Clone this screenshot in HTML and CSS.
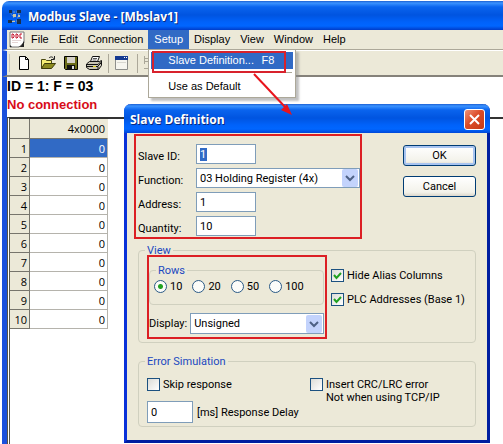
FILE: index.html
```html
<!DOCTYPE html>
<html lang="en">
<head>
<meta charset="utf-8">
<title>Modbus Slave - [Mbslav1]</title>
<link rel="stylesheet" href="styles.css">
</head>
<body>
<main class="window">
  <header class="titlebar">
    <svg class="app-icon" width="16" height="16" viewBox="0 0 16 16" fill="none">
      <path d="M3 3h10M3 3l4 6M12 4l-2 8M3 12h8" stroke="#7f9db0" stroke-dasharray="2 1"/>
      <path d="M2 1h3v3H2zM10 1h4v3h-4zM1 11h4v3H1zM10 10h4v5h-4z" fill="#18304e"/>
      <path d="M6 5h3v3H6zM5 12h3v1H5zM11 6h2v2h-2z" fill="#c9c7a8"/>
    </svg>
    <h1>Modbus Slave - [Mbslav1]</h1>
  </header>
  <nav class="menubar">
    <svg class="doc-icon" width="16" height="17" viewBox="0 0 16 17">
      <path d="M1 1h14v11l-5 4H1z" fill="#fff" stroke="#777"/>
      <path d="M15 10v6H9c3 0 4-3 6-6zM1 14l2 2H1z" fill="#222"/>
      <path d="M3 3v4h1l1-1V4L4 3zM7 3h1l1 1v2L8 7H7V3zM13 3h-2v4h2" fill="none" stroke="#c3152b"/>
      <path d="M3 9.500h9M3 11.500h6" stroke="#e4d5d5"/>
    </svg>
    <button class="menu">File</button>
    <button class="menu">Edit</button>
    <button class="menu">Connection</button>
    <div class="menu-host">
      <button class="menu open">Setup</button>
      <div class="dropdown">
        <button class="item selected"><span>Slave Definition...</span><span>F8</span></button>
        <hr>
        <button class="item">Use as Default</button>
        <div class="mark"></div>
      </div>
    </div>
    <button class="menu">Display</button>
    <button class="menu">View</button>
    <button class="menu">Window</button>
    <button class="menu">Help</button>
  </nav>
  <div class="toolbar">
    <i class="grip"></i>
    <button class="tool" aria-label="New"><svg width="16" height="16" viewBox="0 0 16 16"><path d="M2.500 1.500h6l3 3v10h-9zM8.500 1.500v3h3" fill="#fff" stroke="#000"/></svg></button>
    <button class="tool" aria-label="Open"><svg width="16" height="16" viewBox="0 0 16 16"><path d="M1.500 13.500v-9h4l1 1h5v3" fill="#f5ee75" stroke="#4b4a12"/><path d="M1.500 13.500l3-5h11l-4 5z" fill="#8c8b20" stroke="#3d3c0c"/><path d="M9 3c2-2 4-1 5 1M14.500 1v3.500H11" fill="none" stroke="#222"/></svg></button>
    <button class="tool" aria-label="Save"><svg width="16" height="16" viewBox="0 0 16 16"><path d="M1.500 1.500h13v13h-12l-1-1z" fill="#6b6c1a" stroke="#000"/><path d="M4 2h8v6H4z" fill="#d4d0c8"/><path d="M4 10h8v5H4z" fill="#111"/><path d="M9 11h2v3H9z" fill="#ddd"/></svg></button>
    <button class="tool" aria-label="Print"><svg width="16" height="16" viewBox="0 0 16 16"><path d="M4.500 6.500l2-5h7l-2 5" fill="#fff" stroke="#111"/><path d="M7 3.500h4M6.500 5h4" stroke="#555"/><path d="M3.500 6.500h10l2-1v5l-3 4h-9l-3-2V9z" fill="#c8c5b5" stroke="#111"/><path d="M1 9.500h11l3-3M1 11.500h11v3M12 11l3-3" fill="none" stroke="#111"/><path d="M7 11h3v1H7z" fill="#e4d320"/></svg></button>
    <i class="divider"></i>
    <button class="tool" aria-label="Window"><svg width="16" height="16" viewBox="0 0 16 16"><path d="M.5 1.500h12v13H.5z" fill="#f6f5ee" stroke="#8e8f8b"/><path d="M0 1h13v4H0z" fill="#153a91"/><path d="M9 2h1v1H9zM11 2h1v1h-1z" fill="#fff"/><path d="M2 7.500h9" stroke="#d8d7d0"/></svg></button>
    <i class="divider"></i>
    <button class="tool" aria-label="Connect" disabled><svg width="16" height="16" viewBox="0 0 16 16" fill="none" stroke="#aaa798"><path d="M.5 1v8M1 3.500h3M1 6.500h3M4.500 2v5M0 13.500h4"/></svg></button>
  </div>
  <section class="document">
    <p class="status">ID = 1: F = 03</p>
    <p class="status error">No connection</p>
    <div class="pane">
      <table class="registers">
        <thead><tr><th></th><th class="col">4x0000</th></tr></thead>
        <tbody>
          <tr><th>1</th><td class="current">0</td></tr>
          <tr><th>2</th><td>0</td></tr>
          <tr><th>3</th><td>0</td></tr>
          <tr><th>4</th><td>0</td></tr>
          <tr><th>5</th><td>0</td></tr>
          <tr><th>6</th><td>0</td></tr>
          <tr><th>7</th><td>0</td></tr>
          <tr><th>8</th><td>0</td></tr>
          <tr><th>9</th><td>0</td></tr>
          <tr><th>10</th><td>0</td></tr>
        </tbody>
      </table>
    </div>
  </section>
</main>

<form class="dialog" role="dialog" aria-labelledby="dialog-title">
  <header class="dialog-title">
    <h2 id="dialog-title">Slave Definition</h2>
    <button type="button" class="close" aria-label="Close"><svg width="13" height="13" viewBox="0 0 13 13"><path d="M2 2l9 9M11 2l-9 9" stroke="#fff" stroke-width="2"/></svg></button>
  </header>
  <div class="dialog-body">
    <div class="top">
      <div class="definition marked">
        <label for="slave">Slave ID:</label>
        <div class="text short"><input id="slave" value="1" class="chosen"></div>
        <label for="function">Function:</label>
        <div class="select">
          <select id="function"><option>03 Holding Register (4x)</option></select>
          <svg width="16" height="18" viewBox="0 0 16 18"><rect width="16" height="18" rx="2" fill="#c3d3fc"/><path d="M4 7l4 4 4-4" fill="none" stroke="#4d6185" stroke-width="2"/></svg>
        </div>
        <label for="address">Address:</label>
        <div class="text short"><input id="address" value="1"></div>
        <label for="quantity">Quantity:</label>
        <div class="text short"><input id="quantity" value="10"></div>
      </div>
      <div class="actions">
        <button type="button" class="push default">OK</button>
        <button type="button" class="push">Cancel</button>
      </div>
    </div>
    <fieldset class="group view">
      <legend>View</legend>
      <div class="view-row">
        <div class="format marked">
          <fieldset class="group rows">
            <legend>Rows</legend>
            <div class="radios">
              <label><input type="radio" name="rows" checked>10</label>
              <label><input type="radio" name="rows">20</label>
              <label><input type="radio" name="rows">50</label>
              <label><input type="radio" name="rows">100</label>
            </div>
          </fieldset>
          <div class="display">
            <label for="display">Display:</label>
            <div class="select">
              <select id="display"><option>Unsigned</option></select>
              <svg width="16" height="18" viewBox="0 0 16 18"><rect width="16" height="18" rx="2" fill="#c3d3fc"/><path d="M4 7l4 4 4-4" fill="none" stroke="#4d6185" stroke-width="2"/></svg>
            </div>
          </div>
        </div>
        <div class="checks">
          <label class="check"><span class="box"><input type="checkbox" checked><svg width="13" height="13" viewBox="0 0 13 13"><path d="M3 6l2.500 3L10 4" fill="none" stroke="#21a121" stroke-width="2"/></svg></span>Hide Alias Columns</label>
          <label class="check"><span class="box"><input type="checkbox" checked><svg width="13" height="13" viewBox="0 0 13 13"><path d="M3 6l2.500 3L10 4" fill="none" stroke="#21a121" stroke-width="2"/></svg></span>PLC Addresses (Base 1)</label>
        </div>
      </div>
    </fieldset>
    <fieldset class="group errors">
      <legend>Error Simulation</legend>
      <div class="error-row">
        <div class="response">
          <label class="check"><span class="box"><input type="checkbox"></span>Skip response</label>
          <div class="delay">
            <div class="text"><input id="delay" value="0"></div>
            <label for="delay">[ms] Response Delay</label>
          </div>
        </div>
        <label class="check"><span class="box"><input type="checkbox"></span><span>Insert CRC/LRC error<br>Not when using TCP/IP</span></label>
      </div>
    </fieldset>
  </div>
</form>

<svg class="arrow" width="42" height="46" viewBox="0 0 42 46" aria-hidden="true"><path d="M2 2l32 34" stroke="#e8141c" stroke-width="2"/><path d="M40 43l-11-5 6-6z" fill="#e8141c"/></svg>
</body>
</html>
```

FILE: styles.css
```css
* { box-sizing: border-box; }

body {
  margin: 0;
  background: #fff;
  color: #000;
  font: 11px/13px "Liberation Sans", Arial, sans-serif;
}

button, input, select {
  margin: 0;
  padding: 0;
  border: 0;
  border-radius: 0;
  background: none;
  color: inherit;
  font: inherit;
  appearance: none;
}

h1, h2, p { margin: 0; }
svg { display: block; flex: none; }

/* Main window */
.window {
  display: flex;
  flex-direction: column;
  min-height: 100vh;
  padding: 1px 0 0 2px;
}

.titlebar {
  display: flex;
  align-items: center;
  gap: 5px;
  height: 29px;
  padding: 2px 5px 0;
  border-top-left-radius: 7px;
  background: linear-gradient(#1b5fd2 0, #3b93ff 2px, #0a64ee 6px, #0054e0 14px, #0062fa 21px, #0066ff 25px, #003cc8 29px);
}

h1, h2 {
  color: #fff;
  font: bold 12px/18px "Open Sans", sans-serif;
  text-shadow: 1px 1px #0a2a80;
}

.menubar {
  display: flex;
  align-items: stretch;
  height: 20px;
  border-left: 5px solid #1a50dc;
  border-bottom: 1px solid #aca899;
  background: #ece9d8;
}

.doc-icon { margin: 1px 1px 0 2px; }
.menu { padding: 0 5px; white-space: nowrap; }
.menu-host { position: relative; display: flex; }
.open { padding: 0 6px; background: #316ac5; color: #fff; }

.dropdown {
  position: absolute;
  z-index: 5;
  top: 100%;
  left: 0;
  width: 148px;
  padding: 2px;
  border: 1px solid #aca899;
  background: #fff;
  box-shadow: 3px 3px 2px #8888;
}

.item {
  display: flex;
  align-items: center;
  justify-content: space-between;
  width: 100%;
  height: 17px;
  padding: 0 19px 0 17px;
}

.item.selected { background: #316ac5; color: #fff; }
.dropdown hr { height: 1px; margin: 3px 1px 5px; border: 0; background: #aca899; }

.mark {
  position: absolute;
  top: 1px;
  left: 3px;
  width: 134px;
  height: 22px;
  border: 2px solid #d8222c;
}

.toolbar {
  display: flex;
  align-items: center;
  gap: 7px;
  height: 27px;
  padding-left: 2px;
  border-left: 5px solid #1a50dc;
  border-top: 1px solid #fff;
  border-bottom: 2px solid #85827a;
  background: #ece9d8;
}

.grip { width: 1px; height: 18px; border-left: 1px solid #c9c6b8; }
.divider { width: 1px; height: 19px; margin: 0 -1px; background: #aca899; }
.tool { width: 16px; height: 16px; }

.document {
  display: flex;
  flex: 1;
  flex-direction: column;
  border-left: 5px solid #1a50dc;
}

.status { font-size: 14px; line-height: 18px; font-weight: bold; }
.status.error { padding: 1px 0 3px; font-size: 13px; color: #d80c18; }

.pane {
  flex: 1;
  border-top: 2px solid #333;
  border-left: 3px double #555449;
}

.registers {
  width: 98px;
  border-collapse: separate;
  border-spacing: 0;
  font: 11px/13px "Open Sans", sans-serif;
}

.registers th, .registers td {
  height: 19px;
  padding: 0 2px;
  border-right: 1px solid #b5b3ac;
  border-bottom: 1px solid #b5b3ac;
  text-align: right;
  font-weight: normal;
}

.registers th {
  width: 20px;
  border-color: #77756c;
  background: #ece9d8;
}

.registers .col { width: 78px; border-right-color: #ece9d8; }
.registers .current { background: #316ac5; color: #fff; }
.registers thead th { height: 20px; }

/* Dialog */
.dialog {
  position: absolute;
  z-index: 3;
  top: 104px;
  left: 124px;
  right: 13px;
  border: 3px solid #0831d9;
  border-top: 0;
  border-right-color: #001ea0;
  border-bottom-color: #001ea0;
  border-radius: 7px 7px 0 0;
  background: #ece9d8;
  font-family: Roboto, sans-serif;
}

.dialog-title {
  display: flex;
  align-items: center;
  justify-content: space-between;
  height: 29px;
  margin: 0 -3px;
  padding: 2px 5px 0 6px;
  border-radius: 7px 7px 0 0;
  background: linear-gradient(#1b5fd2 0, #3b93ff 2px, #0a64ee 6px, #0054e0 14px, #0062fa 21px, #0066ff 25px, #0048d8 29px);
}

.close {
  display: grid;
  place-items: center;
  width: 21px;
  height: 21px;
  border: 1px solid #fff;
  border-radius: 3px;
  background: linear-gradient(135deg, #ee9278, #dc4c28 45%, #c43a14);
}

.dialog-body { padding: 1px 11px 13px 7px; }

.top { display: flex; justify-content: space-between; }
.marked { border: 2px solid #dc1f24; }

.definition {
  display: grid;
  grid-template-columns: 58px 164px;
  row-gap: 4px;
  align-items: end;
  width: 228px;
  padding: 8px 0 1px 2px;
}

.definition label { line-height: 14px; }

.text, .select {
  display: flex;
  align-items: center;
  height: 20px;
  border: 1px solid #7f9db9;
  background: #fff;
}

.text { padding: 0 3px; }
.short { width: 60px; }
.text input { width: 100%; }
.text .chosen { width: 7px; background: #316ac5; color: #fff; }

.select { position: relative; padding-right: 1px; }
.select select { flex: 1; min-width: 0; padding-left: 3px; }

.actions { display: grid; align-content: start; gap: 10px; padding-top: 11px; }

.push {
  width: 73px;
  height: 21px;
  border: 1px solid #003c74;
  border-radius: 3px;
  background: linear-gradient(#fff, #f3f2ea 80%, #dcd7cb);
}

.default { box-shadow: inset 0 0 0 2px #a8c4f0; }

.group {
  min-width: 0;
  margin: 0 0 0 4px;
  padding: 0;
  border: 1px solid #d0d0bf;
  border-radius: 4px;
}

legend { padding: 0 2px; color: #1a48c0; line-height: 13px; }
.view { margin-top: 5px; padding: 0 8px; height: 99px; }
.view > legend, .errors > legend { margin-left: -2px; }

.view-row { display: flex; gap: 4px; margin-top: -2px; }
.format { width: 180px; padding: 7px 1px 3px 0; }
.rows { height: 41px; margin-left: 0; }
.rows legend { margin-left: 6px; }

.radios { display: flex; gap: 10px; margin-top: 3px; padding-left: 4px; }
.radios label { display: flex; align-items: center; gap: 3px; }

.radios input {
  width: 13px;
  height: 13px;
  border: 1px solid #2a5a86;
  border-radius: 50%;
  background: #fcfcf9;
}

.radios input:checked { background: radial-gradient(circle, #21a121 0 2px, #fcfcf9 3px); }

.display { display: flex; align-items: center; gap: 3px; margin-top: 8px; }
.display .select { flex: 1; height: 21px; }

.checks { display: grid; align-content: start; gap: 11px; padding-top: 14px; }
.check { display: flex; gap: 3px; white-space: nowrap; }
.box { position: relative; width: 13px; height: 13px; }

.box input {
  display: block;
  width: 13px;
  height: 13px;
  border: 1px solid #1c5180;
  background: linear-gradient(135deg, #dcdcd7, #fff);
}

.box svg { position: absolute; top: 0; left: 0; pointer-events: none; }

.errors { margin-top: 12px; padding: 0 8px; height: 72px; }
.error-row { display: flex; margin-top: 10px; }
.response { width: 163px; }
.delay { display: flex; align-items: center; gap: 4px; margin-top: 10px; }
.delay .text { width: 46px; height: 22px; }

.arrow { position: absolute; z-index: 6; top: 72px; left: 252px; }
```
